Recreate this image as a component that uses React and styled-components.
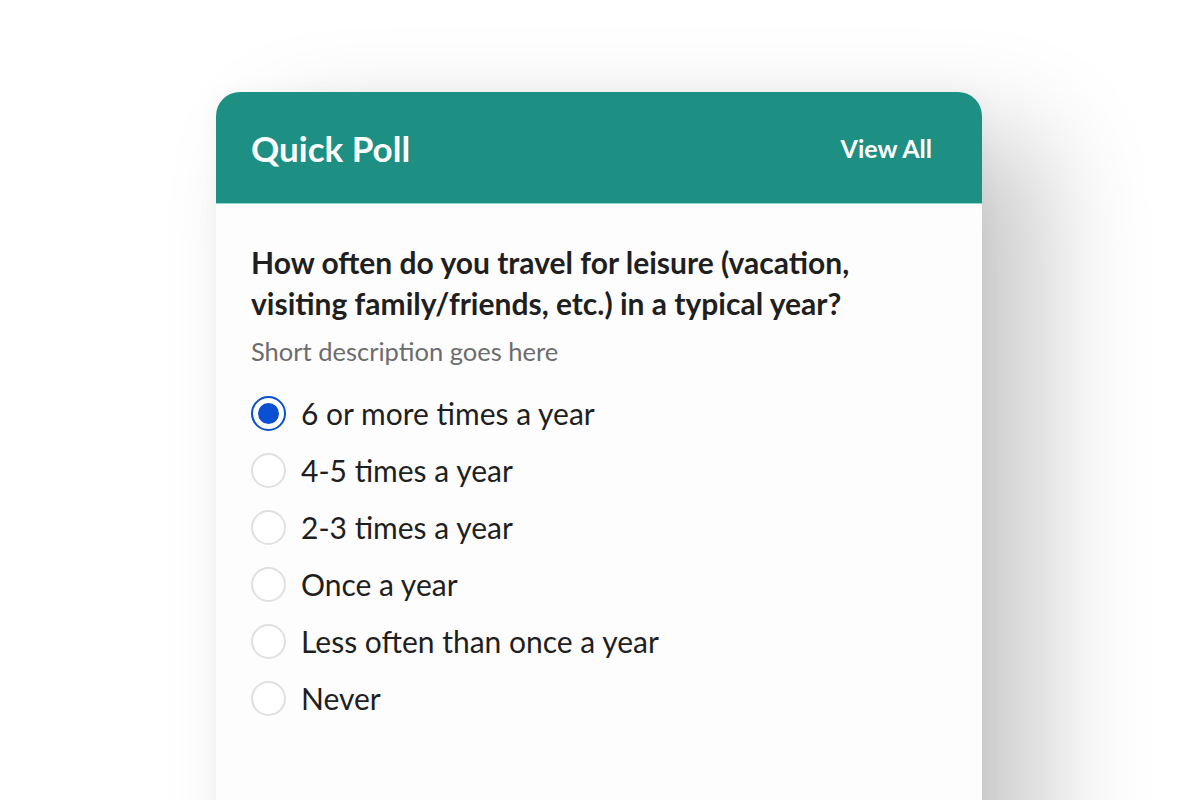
import React, { useState } from "react";
import styled, { createGlobalStyle } from "styled-components";

const Global = createGlobalStyle`
  html, body { margin: 0; padding: 0; background: #ffffff; overflow: hidden; }
  body { font-family: Lato, "Noto Sans", sans-serif; }
  * { box-sizing: border-box; }
`;

const Page = styled.div`
  width: 1200px;
  height: 800px;
  overflow: hidden;
  display: flex;
  padding: 92px 0 0 216px;
`;

const Card = styled.section`
  width: 766px;
  height: 820px;
  flex-shrink: 0;
  border-radius: 24px 24px 0 0;
  background: #fdfdfd;
  box-shadow: 60px 45px 110px rgba(0, 0, 0, 0.22), 0 0 24px rgba(0, 0, 0, 0.04);
  overflow: hidden;
  display: flex;
  flex-direction: column;
`;

const Header = styled.header`
  height: 112px;
  background: #1e8f83;
  border-bottom: 1px solid #8fd6cd;
  display: flex;
  align-items: center;
  justify-content: space-between;
  padding: 0 50px 0 35px;
  color: #ffffff;
`;

const Title = styled.h2`
  margin: 0;
  font-family: Lato, sans-serif;
  font-weight: 700;
  font-size: 35px;
`;

const ViewAll = styled.a`
  font-family: Lato, sans-serif;
  font-weight: 700;
  font-size: 25px;
  color: #ffffff;
  text-decoration: none;
  cursor: pointer;
`;

const Body = styled.div`
  padding: 38px 36px 0 35px;
  display: flex;
  flex-direction: column;
`;

const Question = styled.h3`
  margin: 0;
  font-family: Lato, sans-serif;
  font-weight: 700;
  font-size: 30px;
  line-height: 41px;
  color: #1f1f1f;
  max-width: 660px;
`;

const Description = styled.p`
  margin: 11px 0 0 0;
  font-family: Lato, sans-serif;
  font-size: 25.5px;
  line-height: 32px;
  color: #6c6c6c;
`;

const Options = styled.div`
  margin-top: 29px;
  display: flex;
  flex-direction: column;
  gap: 23px;
`;

const Option = styled.label`
  display: flex;
  align-items: center;
  gap: 15px;
  height: 34px;
  cursor: pointer;
`;

const Radio = styled.span`
  width: 35px;
  height: 35px;
  border-radius: 50%;
  flex-shrink: 0;
  border: 2px solid ${(p) => (p.$checked ? "#0b4fd2" : "#e0e0e2")};
  background: #ffffff;
  display: flex;
  align-items: center;
  justify-content: center;
  &::after {
    content: "";
    width: 21px;
    height: 21px;
    border-radius: 50%;
    background: ${(p) => (p.$checked ? "#0b4fd2" : "transparent")};
  }
`;

const OptionText = styled.span`
  font-family: Lato, sans-serif;
  font-size: 30px;
  line-height: 34px;
  color: #1f1f1f;
`;

const options = [
  "6 or more times a year",
  "4-5 times a year",
  "2-3 times a year",
  "Once a year",
  "Less often than once a year",
  "Never",
];

export default function App() {
  const [selected, setSelected] = useState(0);
  return (
    <>
      <Global />
      <Page>
        <Card>
          <Header>
            <Title>Quick Poll</Title>
            <ViewAll>View All</ViewAll>
          </Header>
          <Body>
            <Question>
              How often do you travel for leisure (vacation, visiting family/friends, etc.) in a typical year?
            </Question>
            <Description>Short description goes here</Description>
            <Options>
              {options.map((o, i) => (
                <Option key={o} onClick={() => setSelected(i)}>
                  <Radio $checked={selected === i} />
                  <OptionText>{o}</OptionText>
                </Option>
              ))}
            </Options>
          </Body>
        </Card>
      </Page>
    </>
  );
}
